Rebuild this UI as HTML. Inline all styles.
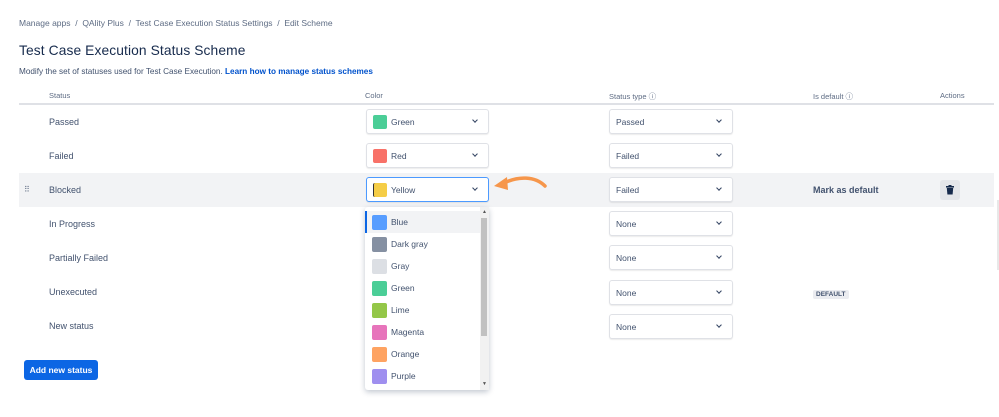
<!DOCTYPE html>
<html><head><style>
*{box-sizing:border-box;margin:0;padding:0}
body{width:999px;height:417px;background:#fff;font-family:"Liberation Sans",sans-serif;color:#42526e;position:relative;overflow:hidden}
.a{position:absolute;white-space:nowrap}
.bc{font-size:8.5px;color:#5e6c84;top:18px;left:19px}
h1{position:absolute;left:19px;top:43px;font-size:13.8px;color:#172b4d;font-weight:normal;letter-spacing:0.1px}
.desc{top:67px;left:19px;font-size:8.2px;color:#42526e}
.desc b{color:#0052cc}
.th{top:91px;font-size:7.5px;color:#5e6c84}
.hl{position:absolute;left:19px;top:103px;width:975px;height:2px;background:#dfe1e6}
.row{position:absolute;left:19px;width:975px;height:34px}
.lbl{left:49px;font-size:9px;color:#42526e}
.sel{position:absolute;height:25px;border:1px solid #dfe1e6;border-radius:3px;background:#fff;font-size:8.5px;color:#42526e;box-shadow:0 1px 1px rgba(0,0,0,.08)}
.sel span{position:absolute;top:7px}
.sw{position:absolute;left:6px;top:5px;width:14px;height:14px;border-radius:2px}
.chev{position:absolute;right:11px;top:8px;width:4px;height:4px;border-right:1.5px solid #344563;border-bottom:1.5px solid #344563;transform:rotate(45deg)}
.dd{position:absolute;left:365px;top:207px;width:124px;height:183px;background:#fff;border-radius:3px;box-shadow:0 2px 6px rgba(9,30,66,.25)}
.it{position:absolute;left:0;width:115px;height:22px;font-size:8.5px}
.it i{position:absolute;left:7px;top:4px;width:15px;height:15px;border-radius:2px}
.it span{position:absolute;left:26px;top:6px}
</style></head><body>
<div class="a bc">Manage apps &nbsp;/&nbsp; QAlity Plus &nbsp;/&nbsp; Test Case Execution Status Settings &nbsp;/&nbsp; Edit Scheme</div>
<h1>Test Case Execution Status Scheme</h1>
<div class="a desc">Modify the set of statuses used for Test Case Execution. <b>Learn how to manage status schemes</b></div>
<div class="a th" style="left:49px">Status</div>
<div class="a th" style="left:365px">Color</div>
<div class="a th" style="left:609px">Status type ⓘ</div>
<div class="a th" style="left:813px">Is default ⓘ</div>
<div class="a th" style="left:940px">Actions</div>
<div class="hl"></div>
<div class="row" style="top:173px;background:#f2f3f5"></div>
<div class="a" style="left:24px;top:185px;font-size:8px;color:#6b778c;letter-spacing:-1px">⠿</div>

<div class="a lbl" style="top:117px">Passed</div>
<div class="a lbl" style="top:151px">Failed</div>
<div class="a lbl" style="top:185px">Blocked</div>
<div class="a lbl" style="top:219px">In Progress</div>
<div class="a lbl" style="top:253px">Partially Failed</div>
<div class="a lbl" style="top:287px">Unexecuted</div>
<div class="a lbl" style="top:321px">New status</div>

<div class="sel" style="left:366px;top:109px;width:123px"><div class="sw" style="background:#4bce97"></div><span style="left:24px">Green</span><div class="chev"></div></div>
<div class="sel" style="left:366px;top:143px;width:123px"><div class="sw" style="background:#f87168"></div><span style="left:24px">Red</span><div class="chev"></div></div>
<div class="sel" style="left:366px;top:177px;width:123px;border:1.5px solid #4c9aff"><div class="sw" style="background:#f5cd47;border-left:1.5px solid #333"></div><span style="left:24px">Yellow</span><div class="chev"></div></div>

<div class="sel" style="left:609px;top:109px;width:124px"><span style="left:6px">Passed</span><div class="chev"></div></div>
<div class="sel" style="left:609px;top:143px;width:124px"><span style="left:6px">Failed</span><div class="chev"></div></div>
<div class="sel" style="left:609px;top:177px;width:124px"><span style="left:6px">Failed</span><div class="chev"></div></div>
<div class="sel" style="left:609px;top:211px;width:124px"><span style="left:6px">None</span><div class="chev"></div></div>
<div class="sel" style="left:609px;top:245px;width:124px"><span style="left:6px">None</span><div class="chev"></div></div>
<div class="sel" style="left:609px;top:280px;width:124px"><span style="left:6px">None</span><div class="chev"></div></div>
<div class="sel" style="left:609px;top:314px;width:124px"><span style="left:6px">None</span><div class="chev"></div></div>

<div class="a" style="left:813px;top:185px;font-size:9px;font-weight:bold;color:#42526e">Mark as default</div>
<div class="a" style="left:940px;top:180px;width:20px;height:20px;background:#e4e6ea;border-radius:3px">
<svg width="20" height="20" viewBox="0 0 20 20"><rect x="6" y="6" width="8" height="1.6" fill="#172b4d"/><rect x="8.5" y="5" width="3" height="1.5" fill="#172b4d"/><path d="M6.8 8h6.4l-.6 6.5H7.4z" fill="#172b4d"/></svg></div>
<div class="a" style="left:813px;top:290px;background:#ebecf0;font-size:6.5px;font-weight:bold;color:#42526e;padding:1px 3px;border-radius:2px">DEFAULT</div>

<div class="a" style="left:24px;top:360px;width:74px;height:20px;background:#0c66e4;border-radius:3px;color:#fff;font-size:8.5px;font-weight:bold;text-align:center;line-height:20px">Add new status</div>

<svg class="a" style="left:490px;top:170px" width="60" height="30" viewBox="0 0 60 30"><path d="M55 16 C45 6 28 6 14 13" stroke="#f6964b" stroke-width="3.5" fill="none" stroke-linecap="round"/><path d="M4 16 L17 7 L18 20 Z" fill="#f6964b"/></svg>

<div class="dd">
<div class="it" style="top:4px;background:#f2f3f5;border-left:2px solid #0c66e4"><i style="background:#579dff;left:5px"></i><span style="left:24px">Blue</span></div>
<div class="it" style="top:26px"><i style="background:#8590a2"></i><span>Dark gray</span></div>
<div class="it" style="top:48px"><i style="background:#dcdfe4"></i><span>Gray</span></div>
<div class="it" style="top:70px"><i style="background:#4bce97"></i><span>Green</span></div>
<div class="it" style="top:92px"><i style="background:#94c748"></i><span>Lime</span></div>
<div class="it" style="top:114px"><i style="background:#e774bb"></i><span>Magenta</span></div>
<div class="it" style="top:136px"><i style="background:#fea362"></i><span>Orange</span></div>
<div class="it" style="top:158px"><i style="background:#9f8fef"></i><span>Purple</span></div>
<div class="a" style="left:115px;top:0;width:9px;height:183px;background:#f1f1f1"></div>
<div class="a" style="left:116px;top:11px;width:6px;height:118px;background:#c1c1c1"></div>
<div class="a" style="left:117px;top:2px;font-size:5px;color:#555">▲</div>
<div class="a" style="left:117px;top:174px;font-size:5px;color:#555">▼</div>
</div>
<div class="a" style="left:997px;top:200px;width:2px;height:70px;background:#e8e8e8"></div>
</body></html>
